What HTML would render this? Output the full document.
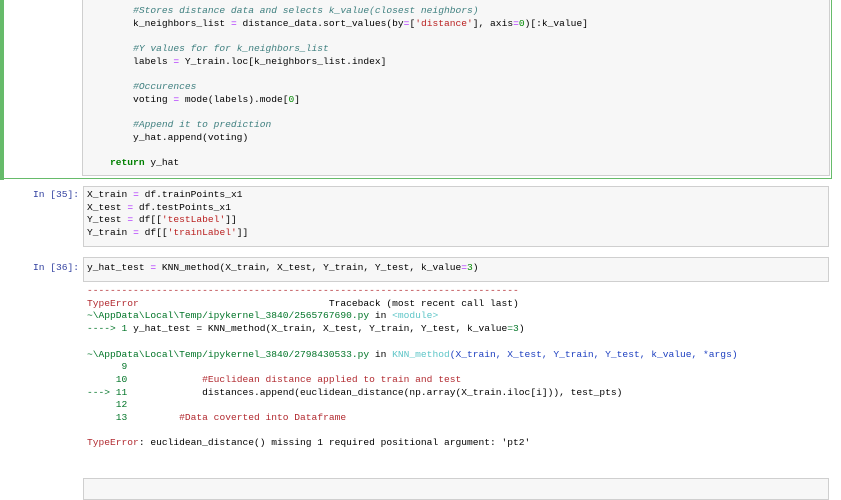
<html><head><style>
body{margin:0;background:#fff;width:841px;height:482px;overflow:hidden;position:relative;font-family:"Liberation Mono",monospace;font-size:9.6px;}
.a{position:absolute}
pre{margin:0;font:inherit;line-height:12.7px;white-space:pre;color:#000}
.box{position:absolute;background:#f7f7f7;border:1px solid #cfcfcf;}
.c{color:#408080;font-style:italic}
.k{color:#008000;font-weight:bold}
.o{color:#aa22ff}
.s{color:#ba2121}
.n{color:#080}
.p{color:#303f9f;position:absolute;text-align:right;width:79px}
.r{color:#b22b31}
.g{color:#007427}
.cy{color:#60c6c8}
.b{color:#1e40c0}
</style></head><body>
<div class="a" style="left:0;top:0;width:4px;height:180px;background:#66bb6a"></div>
<div class="a" style="left:0;top:178px;width:832px;height:1px;background:#66bb6a"></div>
<div class="a" style="left:831px;top:0;width:1px;height:179px;background:#66bb6a"></div>
<div class="box" style="left:82px;top:-2px;width:746px;height:176px"></div>
<pre class="a" style="left:87px;top:5px">        <span class="c">#Stores distance data and selects k_value(closest neighbors)</span>
        k_neighbors_list <span class="o">=</span> distance_data.sort_values(by<span class="o">=</span>[<span class="s">'distance'</span>], axis<span class="o">=</span><span class="n">0</span>)[:k_value]

        <span class="c">#Y values for for k_neighbors_list</span>
        labels <span class="o">=</span> Y_train.loc[k_neighbors_list.index]

        <span class="c">#Occurences</span>
        voting <span class="o">=</span> mode(labels).mode[<span class="n">0</span>]

        <span class="c">#Append it to prediction</span>
        y_hat.append(voting)

    <span class="k">return</span> y_hat</pre>
<pre class="p" style="left:0;top:189px">In [35]:</pre>
<div class="box" style="left:83px;top:186px;width:744px;height:59px"></div>
<pre class="a" style="left:87px;top:189px">X_train <span class="o">=</span> df.trainPoints_x1
X_test <span class="o">=</span> df.testPoints_x1
Y_test <span class="o">=</span> df[[<span class="s">'testLabel'</span>]]
Y_train <span class="o">=</span> df[[<span class="s">'trainLabel'</span>]]</pre>
<pre class="p" style="left:0;top:262px">In [36]:</pre>
<div class="box" style="left:83px;top:257px;width:744px;height:23px"></div>
<pre class="a" style="left:87px;top:262px">y_hat_test <span class="o">=</span> KNN_method(X_train, X_test, Y_train, Y_test, k_value<span class="o">=</span><span class="n">3</span>)</pre>
<pre class="a" style="left:87px;top:285px"><span class="r">---------------------------------------------------------------------------</span>
<span class="r">TypeError</span>                                 Traceback (most recent call last)
<span class="g">~\AppData\Local\Temp/ipykernel_3840/2565767690.py</span> in <span class="cy">&lt;module&gt;</span>
<span class="g">----&gt; 1</span> y_hat_test = KNN_method(X_train, X_test, Y_train, Y_test, k_value<span class="g">=3</span>)

<span class="g">~\AppData\Local\Temp/ipykernel_3840/2798430533.py</span> in <span class="cy">KNN_method</span><span class="b">(X_train, X_test, Y_train, Y_test, k_value, *args)</span>
<span class="g">      9</span>
<span class="g">     10</span>             <span class="r">#Euclidean distance applied to train and test</span>
<span class="g">---&gt; 11</span>             distances.append(euclidean_distance(np.array(X_train.iloc[i])), test_pts)
<span class="g">     12</span>
<span class="g">     13</span>         <span class="r">#Data coverted into Dataframe</span>

<span class="r">TypeError</span>: euclidean_distance() missing 1 required positional argument: 'pt2'</pre>
<div class="box" style="left:83px;top:478px;width:744px;height:20px"></div>
</body></html>
